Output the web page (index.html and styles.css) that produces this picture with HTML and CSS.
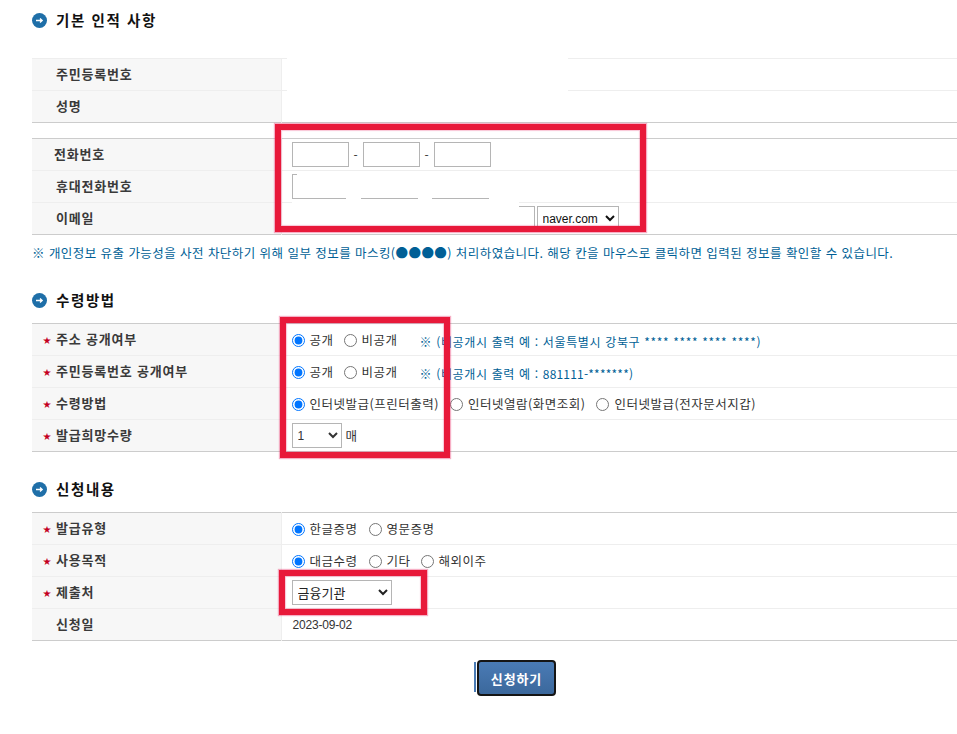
FILE: index.html
```html
<!DOCTYPE html>
<html lang="ko">
<head>
<meta charset="utf-8">
<title>기본 인적 사항</title>
<link rel="stylesheet" href="styles.css">
</head>
<body>
<div class="page">
  <h2 class="heading heading-first"><svg class="bullet" viewBox="0 0 15 15"><circle cx="7.5" cy="7.5" r="7.5" fill="#1f6fa8"/><path d="M4 7.5h6M8 5.5l2.2 2-2.2 2" fill="none" stroke="#fff" stroke-width="1.3"/></svg>기본 인적 사항</h2>
  <table class="form form-soft">
    <tr><th class="plain">주민등록번호</th><td></td></tr>
    <tr><th class="plain">성명</th><td></td></tr>
  </table>
  <table class="form form-second">
    <tr><th class="tight">전화번호</th><td><div class="line"><input class="tel"><span class="dash">-</span><input class="tel"><span class="dash">-</span><input class="tel"></div></td></tr>
    <tr><th class="plain">휴대전화번호</th><td><div class="line mobile"><input class="tel"><input class="tel"><input class="tel"></div></td></tr>
    <tr><th class="plain">이메일</th><td><div class="line"><input class="email"><select class="domain"><option>naver.com</option></select></div></td></tr>
  </table>
  <p class="note">※ 개인정보 유출 가능성을 사전 차단하기 위해 일부 정보를 마스킹(●●●●) 처리하였습니다. 해당 칸을 마우스로 클릭하면 입력된 정보를 확인할 수 있습니다.</p>

  <h2 class="heading heading-second"><svg class="bullet" viewBox="0 0 15 15"><circle cx="7.5" cy="7.5" r="7.5" fill="#1f6fa8"/><path d="M4 7.5h6M8 5.5l2.2 2-2.2 2" fill="none" stroke="#fff" stroke-width="1.3"/></svg>수령방법</h2>
  <table class="form">
    <tr><th><i>★</i>주소 공개여부</th><td><div class="line"><label class="opt opt-short"><input type="radio" name="a" checked>공개</label><label class="opt"><input type="radio" name="a">비공개</label><span class="hint">※ (비공개시 출력 예 : 서울특별시 강북구 **** **** **** ****)</span></div></td></tr>
    <tr><th><i>★</i>주민등록번호 공개여부</th><td><div class="line"><label class="opt opt-short"><input type="radio" name="b" checked>공개</label><label class="opt"><input type="radio" name="b">비공개</label><span class="hint">※ (비공개시 출력 예 : <span class="hint-tight">881111-*******</span>)</span></div></td></tr>
    <tr><th><i>★</i>수령방법</th><td><div class="line"><label class="opt"><input type="radio" name="c" checked>인터넷발급(프린터출력)</label><label class="opt"><input type="radio" name="c">인터넷열람(화면조회)</label><label class="opt"><input type="radio" name="c">인터넷발급(전자문서지갑)</label></div></td></tr>
    <tr><th><i>★</i>발급희망수량</th><td><div class="line"><select class="qty"><option>1</option></select><span class="unit">매</span></div></td></tr>
  </table>

  <h2 class="heading"><svg class="bullet" viewBox="0 0 15 15"><circle cx="7.5" cy="7.5" r="7.5" fill="#1f6fa8"/><path d="M4 7.5h6M8 5.5l2.2 2-2.2 2" fill="none" stroke="#fff" stroke-width="1.3"/></svg>신청내용</h2>
  <table class="form">
    <tr><th><i>★</i>발급유형</th><td><div class="line"><label class="opt"><input type="radio" name="d" checked>한글증명</label><label class="opt"><input type="radio" name="d">영문증명</label></div></td></tr>
    <tr><th><i>★</i>사용목적</th><td><div class="line"><label class="opt"><input type="radio" name="e" checked>대금수령</label><label class="opt opt-short"><input type="radio" name="e">기타</label><label class="opt"><input type="radio" name="e">해외이주</label></div></td></tr>
    <tr><th><i>★</i>제출처</th><td><div class="line"><select class="place"><option>금융기관</option></select></div></td></tr>
    <tr><th class="plain">신청일</th><td><span class="date">2023-09-02</span></td></tr>
  </table>
  <div class="actions"><button class="submit" type="button">신청하기</button></div>
</div>

<div class="mask mask-a"></div>
<div class="mask mask-b"></div>
<div class="mask mask-c"></div>
<div class="mask mask-d"></div>
<div class="mask mask-e"></div>
<div class="callout callout-a"></div>
<div class="callout callout-b"></div>
<div class="callout callout-c"></div>
</body>
</html>
```
FILE: styles.css
```css
html, body { margin: 0; padding: 0; background: #fff; }
body { font-family: "Noto Sans CJK KR", "Liberation Sans", sans-serif; font-size: 12.5px; color: #333; height: 734px; overflow: hidden; position: relative; }
.page { padding-left: 32px; }
.heading { display: flex; align-items: center; box-sizing: border-box; height: 15px; padding-bottom: 2px; margin: 30px 0 15px; font-size: 14.5px; font-weight: 700; color: #111; letter-spacing: 1.6px; }
.heading-first { margin: 13px 0 30px; }
.heading-second { margin-top: 31px; }
.bullet { width: 15px; height: 15px; margin: 2px 9px 0 0; flex: none; }
.form { border-collapse: collapse; width: 925px; border-top: 1px solid #ccc; border-bottom: 1px solid #ccc; table-layout: fixed; }
.form-soft { border-top-color: #eee; }
.form-second { margin-top: 15px; }
.form tr + tr th, .form tr + tr td { border-top: 1px solid #eee; }
.form th { width: 249px; height: 32px; padding: 0 0 2px 11px; box-sizing: border-box; background: #f7f7f7; border-right: 1px solid #eee; text-align: left; font-size: 13px; font-weight: 700; color: #3a3a3a; letter-spacing: .8px; }
.form th.plain { padding-left: 24px; }
.form th.tight { padding-left: 22px; }
.form th i { font-style: normal; font-size: 8px; color: #c4001e; display: inline-block; width: 13px; letter-spacing: 0; vertical-align: 1px; }
.form td { padding: 0 0 0 10px; height: 32px; box-sizing: border-box; }
.line { display: flex; align-items: center; white-space: nowrap; }
.tel, .email, .qty, .place, .domain { box-sizing: border-box; height: 25px; border: 1px solid #b5b5b5; background: #fff; margin: 0; padding: 0; border-radius: 0; }
.tel { width: 57px; }
.dash { width: 14px; text-align: center; font-size: 12px; }
.mobile { gap: 12px; }
.mobile .tel + .tel + .tel { margin-left: 2px; }
.email { width: 243px; }
.domain { width: 82px; margin-left: 2px; font: 12px "Liberation Sans", sans-serif; color: #111; padding-left: 1px; }
.opt { display: flex; align-items: center; margin-right: 11px; letter-spacing: .5px; }
.opt-short { margin-right: 10px; }
.opt input { margin: 2px 5px 0 0; width: 13px; height: 13px; }
.hint { color: #005f96; margin-left: 11px; font-size: 12px; letter-spacing: .65px; padding-top: 4px; }
.hint-tight { letter-spacing: .2px; }
.qty { width: 50px; font: 12px "Liberation Sans", sans-serif; color: #333; padding-left: 1px; }
.unit { margin-left: 4px; }
.place { width: 100px; font: 13px "Noto Sans CJK KR", sans-serif; color: #222; padding-left: 1px; }
.date { display: block; font-size: 12px; letter-spacing: -.2px; color: #333; margin-left: 1px; font-family: "Liberation Sans", sans-serif; }
.note { margin: 9px 0 0; height: 18px; line-height: 18px; color: #005f96; font-size: 12.5px; letter-spacing: .44px; white-space: nowrap; }
.actions { padding: 19px 0 0 445px; }
.submit { position: relative; box-sizing: border-box; width: 79px; height: 36px; border: 2px solid #151515; border-radius: 4px; background: linear-gradient(#4a7bb5, #3b689c); color: #fff; font: 700 13px "Noto Sans CJK KR", sans-serif; letter-spacing: .9px; padding: 0; }
.submit::before { content: ""; position: absolute; left: -5px; top: 0; width: 2px; height: 30px; background: #4a7bb5; }
.mask { position: absolute; background: #fff; }
.mask-a { left: 297px; top: 171px; width: 222px; height: 27px; }
.mask-b { left: 293px; top: 175px; width: 5px; height: 23px; }
.mask-c { left: 346px; top: 196px; width: 4px; height: 4px; }
.mask-d { left: 292px; top: 200px; width: 227px; height: 30px; }
.mask-e { left: 287px; top: 58px; width: 281px; height: 64px; }
.callout { position: absolute; box-sizing: border-box; border: 6px solid #e8193a; box-shadow: 0 0 1px 1px rgba(232, 25, 90, .35), inset 0 0 1px 1px rgba(232, 25, 90, .25); }
.callout-a { left: 275px; top: 124px; width: 371px; height: 108px; }
.callout-b { left: 280px; top: 317px; width: 170px; height: 141px; }
.callout-c { left: 279px; top: 570px; width: 148px; height: 45px; }
```
